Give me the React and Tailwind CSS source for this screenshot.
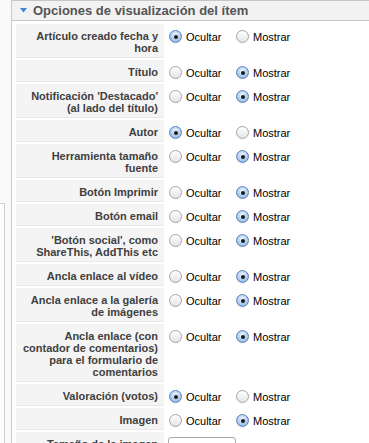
import React from "react";

const rows = [
  { label: ["Artículo creado fecha y", "hora"], value: "hide" },
  { label: ["Título"], value: "show" },
  { label: ["Notificación 'Destacado'", "(al lado del título)"], value: "show" },
  { label: ["Autor"], value: "hide" },
  { label: ["Herramienta tamaño", "fuente"], value: "show" },
  { label: ["Botón Imprimir"], value: "show" },
  { label: ["Botón email"], value: "show" },
  { label: ["'Botón social', como", "ShareThis, AddThis etc"], value: "show" },
  { label: ["Ancla enlace al vídeo"], value: "show" },
  { label: ["Ancla enlace a la galería", "de imágenes"], value: "show" },
  {
    label: [
      "Ancla enlace (con",
      "contador de comentarios)",
      "para el formulario de",
      "comentarios",
    ],
    value: "show",
  },
  { label: ["Valoración (votos)"], value: "hide" },
  { label: ["Imagen"], value: "show" },
];

// Aqua style radio button
const Radio = ({ checked }) =>
  checked ? (
    <span className="w-[13px] h-[13px] shrink-0 rounded-full border border-[#5b80b2] bg-[radial-gradient(circle_at_50%_35%,#eef6fe_0%,#a9c8ee_60%,#7ea7dc_100%)] flex items-center justify-center">
      <span className="w-[4px] h-[4px] rounded-full bg-[#1b1b1b]" />
    </span>
  ) : (
    <span className="w-[13px] h-[13px] shrink-0 rounded-full border border-[#a3a3a3] bg-gradient-to-b from-white to-[#e4e4e4]" />
  );

const Option = ({ text, checked, wide }) => (
  <label className={`flex items-center gap-[4px] h-[13px] ${wide ? "w-[67px]" : ""}`}>
    <Radio checked={checked} />
    <span className="text-[11px] text-black leading-[12px]">{text}</span>
  </label>
);

const Row = ({ label, value }) => (
  <div className="flex">
    <div className="w-[148px] shrink-0 bg-[#f4f4f4] border-b border-[#e9e9e9] pt-[6px] pb-[3px] pr-[6px] text-right text-[11px] leading-[12px] font-bold text-[#404040] whitespace-nowrap">
      {label.map((line, i) => (
        <div key={i}>{line}</div>
      ))}
    </div>
    <div className="flex pl-[5px] pt-[6px]">
      <Option text="Ocultar" checked={value === "hide"} wide />
      <Option text="Mostrar" checked={value === "show"} />
    </div>
  </div>
);

export default function App() {
  return (
    <div className="flex w-[369px] h-[443px] overflow-hidden bg-white font-['Liberation_Sans',Arial,sans-serif]">
      <div className="w-[11px] shrink-0 flex flex-col bg-[#fafafa]">
        <div className="h-[203px]" />
        <div className="flex-1 w-[5px] border-t border-r border-[#cfcfcf] bg-white" />
      </div>
      <div className="flex-1 min-w-0 border-l border-[#c9c9c9]">
        <div className="h-[21px] flex items-center bg-[#f2f2f2] border-t border-b border-[#c6c6c6] pl-[8px] gap-[6px]">
          <svg width="7" height="5" viewBox="0 0 7 5" className="shrink-0">
            <polygon points="0,0 7,0 3.5,4.5" fill="#3b87d6" />
          </svg>
          <span className="text-[13px] font-bold text-[#555] whitespace-nowrap">
            Opciones de visualización del ítem
          </span>
        </div>
        <div className="flex flex-col gap-[2px] pl-[4px] pt-[3px]">
          {rows.map((r, i) => (
            <Row key={i} label={r.label} value={r.value} />
          ))}
          <div className="flex">
            <div className="w-[148px] shrink-0 bg-[#f4f4f4] pt-[6px] pr-[6px] text-right text-[11px] leading-[12px] font-bold text-[#404040] whitespace-nowrap">
              Tamaño de la imagen
            </div>
            <div className="pl-[4px] pt-[5px]">
              <div className="w-[68px] h-[18px] rounded-[3px] border border-[#aaa] bg-white" />
            </div>
          </div>
        </div>
      </div>
    </div>
  );
}
